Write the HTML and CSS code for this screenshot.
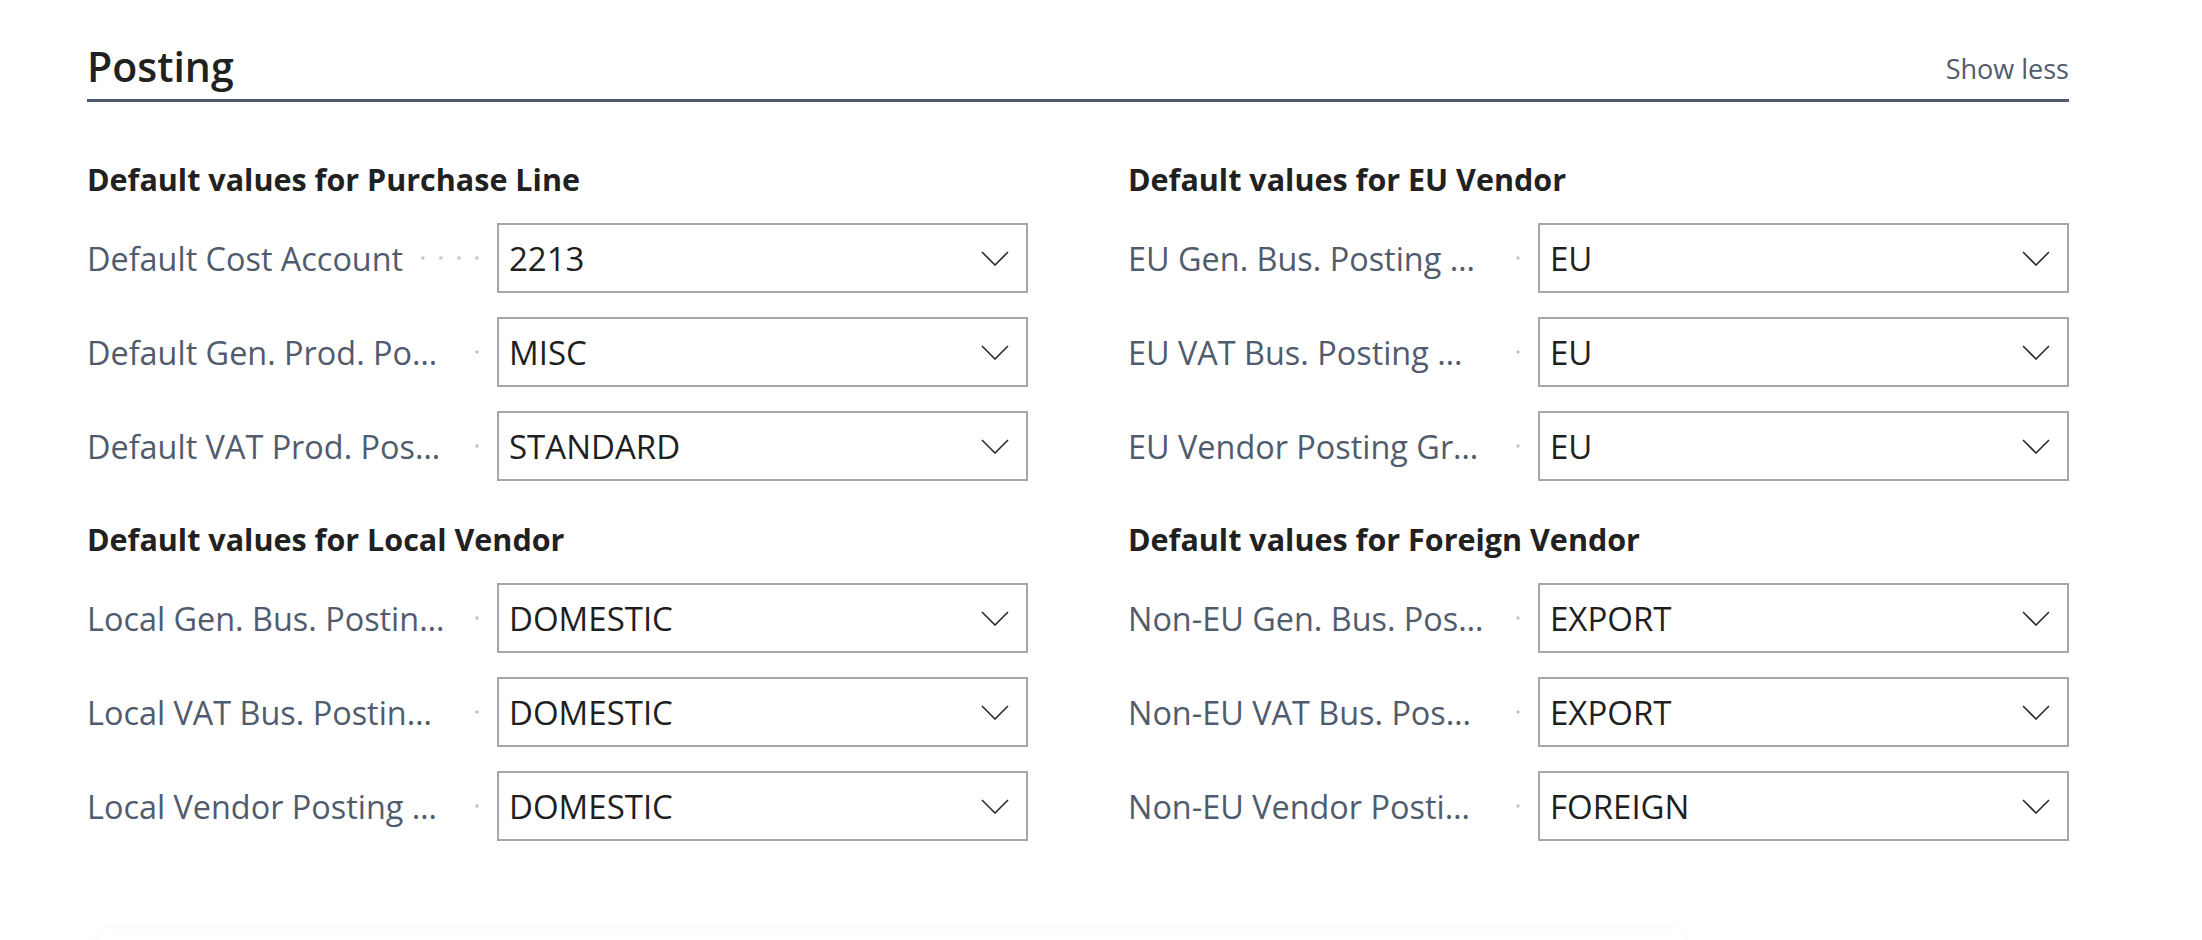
FILE: index.html
```html
<!DOCTYPE html>
<html lang="en">
<head>
    <meta charset="UTF-8">
    <meta name="viewport" content="width=device-width, initial-scale=1.0">
    <title>Vendor Template - Posting</title>
    <link rel="stylesheet" href="styles.css">
</head>

<body>
    <div class="page">
        <div class="section-head">
            <h2 class="section-title">Posting</h2>
            <a class="show-less" href="#">Show less</a>
        </div>

        <div class="columns">
            <!-- Left column -->
            <div class="column">
                <div class="group">
                    <h3 class="group-title">Default values for Purchase Line</h3>
                    <div class="field">
                        <label class="field-label"><span class="label-text">Default Cost Account</span><span class="leader"></span></label>
                        <div class="select"><span class="select-value">2213</span><svg class="chevron" viewBox="0 0 28 15"><polyline points="1,1 14,14 27,1"/></svg></div>
                    </div>
                    <div class="field">
                        <label class="field-label" title="Default Gen. Prod. Posting Group"><span class="label-text truncated">Default Gen. Prod. Po…</span><span class="leader"></span></label>
                        <div class="select"><span class="select-value">MISC</span><svg class="chevron" viewBox="0 0 28 15"><polyline points="1,1 14,14 27,1"/></svg></div>
                    </div>
                    <div class="field">
                        <label class="field-label" title="Default VAT Prod. Posting Group"><span class="label-text truncated">Default VAT Prod. Pos…</span><span class="leader"></span></label>
                        <div class="select"><span class="select-value">STANDARD</span><svg class="chevron" viewBox="0 0 28 15"><polyline points="1,1 14,14 27,1"/></svg></div>
                    </div>
                </div>

                <div class="group">
                    <h3 class="group-title">Default values for Local Vendor</h3>
                    <div class="field">
                        <label class="field-label" title="Local Gen. Bus. Posting Group"><span class="label-text truncated">Local Gen. Bus. Postin…</span><span class="leader"></span></label>
                        <div class="select"><span class="select-value">DOMESTIC</span><svg class="chevron" viewBox="0 0 28 15"><polyline points="1,1 14,14 27,1"/></svg></div>
                    </div>
                    <div class="field">
                        <label class="field-label" title="Local VAT Bus. Posting Group"><span class="label-text truncated">Local VAT Bus. Postin…</span><span class="leader"></span></label>
                        <div class="select"><span class="select-value">DOMESTIC</span><svg class="chevron" viewBox="0 0 28 15"><polyline points="1,1 14,14 27,1"/></svg></div>
                    </div>
                    <div class="field">
                        <label class="field-label" title="Local Vendor Posting Group"><span class="label-text truncated">Local Vendor Posting …</span><span class="leader"></span></label>
                        <div class="select"><span class="select-value">DOMESTIC</span><svg class="chevron" viewBox="0 0 28 15"><polyline points="1,1 14,14 27,1"/></svg></div>
                    </div>
                </div>
            </div>

            <!-- Right column -->
            <div class="column">
                <div class="group">
                    <h3 class="group-title">Default values for EU Vendor</h3>
                    <div class="field">
                        <label class="field-label" title="EU Gen. Bus. Posting Group"><span class="label-text truncated">EU Gen. Bus. Posting …</span><span class="leader"></span></label>
                        <div class="select"><span class="select-value">EU</span><svg class="chevron" viewBox="0 0 28 15"><polyline points="1,1 14,14 27,1"/></svg></div>
                    </div>
                    <div class="field">
                        <label class="field-label" title="EU VAT Bus. Posting Group"><span class="label-text truncated">EU VAT Bus. Posting …</span><span class="leader"></span></label>
                        <div class="select"><span class="select-value">EU</span><svg class="chevron" viewBox="0 0 28 15"><polyline points="1,1 14,14 27,1"/></svg></div>
                    </div>
                    <div class="field">
                        <label class="field-label" title="EU Vendor Posting Group"><span class="label-text truncated">EU Vendor Posting Gr…</span><span class="leader"></span></label>
                        <div class="select"><span class="select-value">EU</span><svg class="chevron" viewBox="0 0 28 15"><polyline points="1,1 14,14 27,1"/></svg></div>
                    </div>
                </div>

                <div class="group">
                    <h3 class="group-title">Default values for Foreign Vendor</h3>
                    <div class="field">
                        <label class="field-label" title="Non-EU Gen. Bus. Posting Group"><span class="label-text truncated">Non-EU Gen. Bus. Pos…</span><span class="leader"></span></label>
                        <div class="select"><span class="select-value">EXPORT</span><svg class="chevron" viewBox="0 0 28 15"><polyline points="1,1 14,14 27,1"/></svg></div>
                    </div>
                    <div class="field">
                        <label class="field-label" title="Non-EU VAT Bus. Posting Group"><span class="label-text truncated">Non-EU VAT Bus. Pos…</span><span class="leader"></span></label>
                        <div class="select"><span class="select-value">EXPORT</span><svg class="chevron" viewBox="0 0 28 15"><polyline points="1,1 14,14 27,1"/></svg></div>
                    </div>
                    <div class="field">
                        <label class="field-label" title="Non-EU Vendor Posting Group"><span class="label-text truncated">Non-EU Vendor Posti…</span><span class="leader"></span></label>
                        <div class="select"><span class="select-value">FOREIGN</span><svg class="chevron" viewBox="0 0 28 15"><polyline points="1,1 14,14 27,1"/></svg></div>
                    </div>
                </div>
            </div>
        </div>

        <div class="next-card"></div>
    </div>
</body>
</html>
```

FILE: styles.css
```css
body {
    margin: 0;
    background-color: #ffffff;
    font-family: "Open Sans", "Noto Sans", sans-serif;
    color: #212121;
}

.page {
    padding: 41px 133px 0 87px;
}

/* Section header */
.section-head {
    display: flex;
    justify-content: space-between;
    align-items: flex-end;
    padding-bottom: 8px;
    border-bottom: 3px solid #505c6d;
}

.section-title {
    margin: 0;
    font-size: 41px;
    font-weight: 600;
    line-height: 50px;
    color: #212121;
}

.show-less {
    margin-bottom: 4px;
    font-size: 27px;
    color: #505c6d;
    text-decoration: none;
}

/* Two column field layout */
.columns {
    display: grid;
    grid-template-columns: 941px 941px;
    column-gap: 100px;
    margin-top: 57px;
}

.column {
    display: flex;
    flex-direction: column;
    gap: 38px;
}

.group {
    display: flex;
    flex-direction: column;
    gap: 24px;
}

.group-title {
    margin: 0;
    font-size: 30.5px;
    font-weight: 700;
    line-height: 40px;
    color: #212121;
}

.field {
    display: flex;
    align-items: center;
    height: 70px;
}

.field-label {
    flex: 0 0 410px;
    display: flex;
    align-items: center;
    font-size: 32.4px;
    color: #505c6d;
}

.label-text {
    max-width: 372px;
    white-space: nowrap;
    overflow: hidden;
    text-overflow: ellipsis;
}

.label-text.truncated {
    flex: 0 0 372px;
}

.leader {
    flex: 1;
    height: 4px;
    margin: 0 11px 0 10px;
    background: radial-gradient(circle, #c4c8ce 1.4px, transparent 2px) right center / 18px 4px repeat-x;
}

.select {
    flex: 0 0 531px;
    box-sizing: border-box;
    height: 70px;
    display: flex;
    align-items: center;
    justify-content: space-between;
    padding: 0 17px 0 10px;
    border: 2px solid #a6a6a6;
    background-color: #ffffff;
}

.select-value {
    font-size: 33px;
    color: #1f1f1f;
}

.chevron {
    width: 28px;
    height: 15px;
    fill: none;
    stroke: #2b2b2b;
    stroke-width: 1.6;
}

/* top edge of the next card, just peeking in */
.next-card {
    height: 40px;
    margin: 88px 384px 0 11px;
    border-radius: 6px;
    box-shadow: 0 0 10px rgba(0, 0, 0, 0.035);
}
```
